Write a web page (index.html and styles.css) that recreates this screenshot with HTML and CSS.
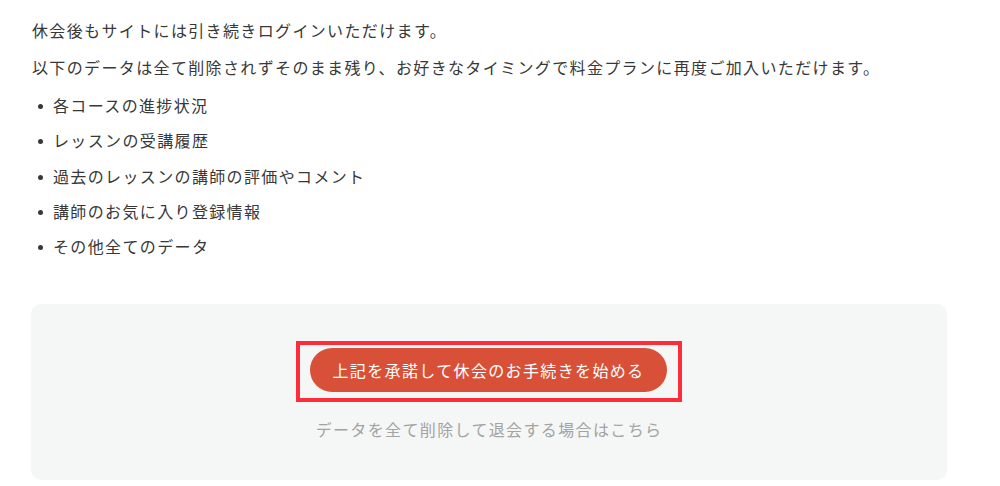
FILE: index.html
```html
<!DOCTYPE html>
<html lang="ja">
<head>
<meta charset="utf-8">
<link rel="stylesheet" href="styles.css">
</head>
<body>
<div class="page">
  <p class="lead">休会後もサイトには引き続きログインいただけます。</p>
  <p class="lead">以下のデータは全て削除されずそのまま残り、お好きなタイミングで料金プランに再度ご加入いただけます。</p>
  <ul class="data-list">
    <li>各コースの進捗状況</li>
    <li>レッスンの受講履歴</li>
    <li>過去のレッスンの講師の評価やコメント</li>
    <li>講師のお気に入り登録情報</li>
    <li>その他全てのデータ</li>
  </ul>
  <div class="action-box">
    <div class="highlight">
      <button class="primary-btn">上記を承諾して休会のお手続きを始める</button>
    </div>
    <a class="sub-link">データを全て削除して退会する場合はこちら</a>
  </div>
</div>
</body>
</html>
```

FILE: styles.css
```css
html, body {
  margin: 0;
  padding: 0;
  background: #ffffff;
}
body {
  font-family: "Noto Sans CJK JP", "Noto Sans", sans-serif;
  font-size: 16px;
  letter-spacing: 0.085em;
  color: #383838;
}
.page {
  padding: 12px 53px 0 32px;
}
.lead {
  margin: 0;
  line-height: 37px;
}
.data-list {
  list-style: none;
  margin: 2px 0 0 0;
  padding: 0;
}
.data-list li {
  position: relative;
  padding-left: 21px;
  line-height: 35.3px;
}
.data-list li::before {
  content: "";
  position: absolute;
  left: 6px;
  top: 16px;
  width: 5px;
  height: 5px;
  border-radius: 50%;
  background: #383838;
}
.action-box {
  margin-top: 40px;
  margin-left: -1px;
  background: #f5f6f6;
  border-radius: 10px;
  height: 176px;
  box-sizing: border-box;
  padding-top: 37px;
  display: flex;
  flex-direction: column;
  align-items: center;
}
.highlight {
  border: 4px solid #ff2d3a;
  padding: 3px 11px 6px 10px;
  display: flex;
}
.primary-btn {
  font-family: inherit;
  font-size: 16px;
  letter-spacing: 0.085em;
  color: #ffffff;
  background: #d85037;
  border: none;
  border-radius: 22px;
  height: 44px;
  width: 357px;
  padding: 0;
  cursor: pointer;
}
.sub-link {
  margin-top: 14px;
  color: #a3a3a3;
  line-height: 26px;
}
```
